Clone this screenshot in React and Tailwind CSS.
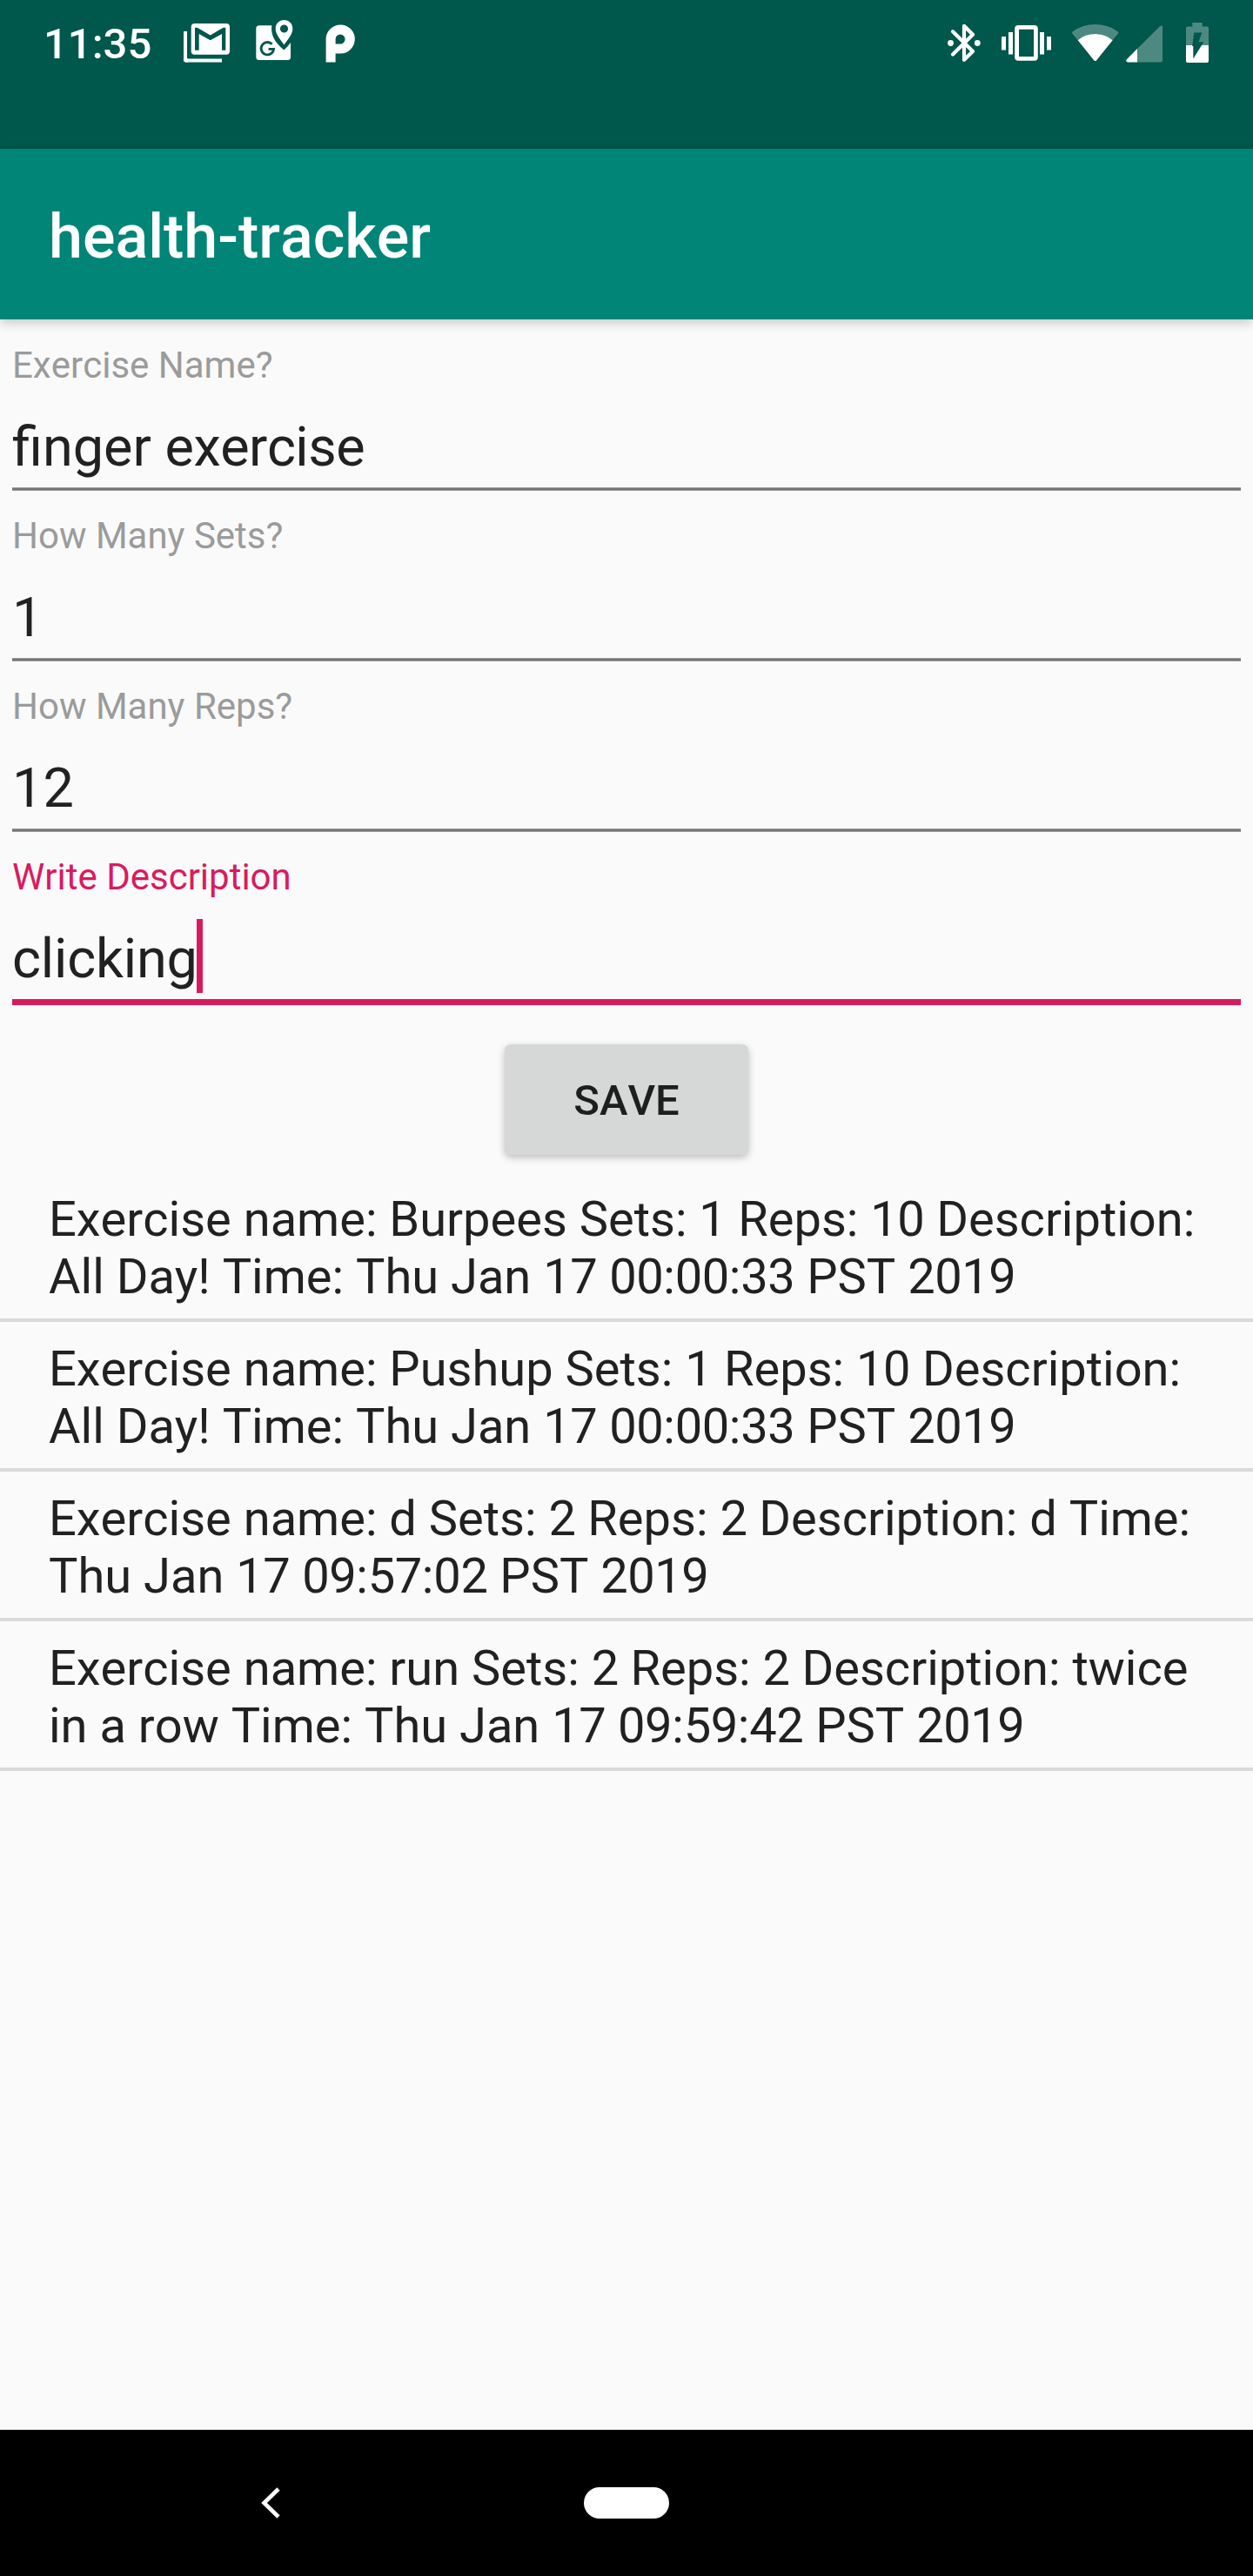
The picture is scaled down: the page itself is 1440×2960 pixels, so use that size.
import { Fragment } from "react";

const FIELDS = [
  {
    label: "Exercise Name?",
    value: (
      <>
        finger <span className="tracking-[-0.5px]">exercise</span>
      </>
    ),
  },
  { label: "How Many Sets?", value: "1" },
  { label: "How Many Reps?", value: "12" },
  { label: "Write Description", value: <span className="tracking-[-0.15px]">clicking</span>, focused: true },
];

const ENTRIES = [
  ["Exercise name: Burpees Sets: 1 Reps: 10 Description:", "All Day! Time: Thu Jan 17 00:00:33 PST 2019"],
  ["Exercise name: Pushup Sets: 1 Reps: 10 Description:", "All Day! Time: Thu Jan 17 00:00:33 PST 2019"],
  ["Exercise name: d Sets: 2 Reps: 2 Description: d Time:", "Thu Jan 17 09:57:02 PST 2019"],
  ["Exercise name: run Sets: 2 Reps: 2 Description: twice", "in a row Time: Thu Jan 17 09:59:42 PST 2019"],
];

function MailIcon() {
  return (
    <svg className="mt-[27px] ml-[37px] h-[45px] w-[54px]" viewBox="0 0 54 45" fill="none">
      <path d="M2 9V41.5Q2 42.4 2.9 42.4H44" stroke="#fff" strokeWidth="4" />
      <path d="M0 40V41.4Q0 44.4 3 44.4H5V40Z" fill="#fff" />
      <rect x="8.7" y="0" width="44.3" height="35.7" rx="4" fill="#fff" />
      <path d="M13 4.7H15.7L30.7 13.5L45.7 4.7H48.3V30.7H44V12L30.7 19.3L17.7 12V30.7H13Z" fill="#00574b" />
    </svg>
  );
}

function MapsIcon() {
  return (
    <svg className="mt-[23px] ml-[29px] h-[47px] w-[43px]" viewBox="0 0 43 47" fill="none">
      <path d="M4 6.3H18.3C17 17 21 25 32.3 34.5Q37 30.5 40 26V42.5Q40 46 36.5 46H4Q0.3 46 0.3 42.5V10Q0.3 6.3 4 6.3Z" fill="#fff" />
      <path d="M18.6 27.8A7.2 7.2 0 1 0 20.5 33.4H14.6" stroke="#00574b" strokeWidth="2.8" />
      <path fillRule="evenodd" d="M32.5 0C26.5 0 22.7 4.4 22.7 10C22.7 17 28 21.5 32.5 28.5C37 21.5 42.3 17 42.3 10C42.3 4.4 38.5 0 32.5 0ZM32.5 5.4A4.6 4.6 0 1 1 32.5 14.6A4.6 4.6 0 1 1 32.5 5.4Z" fill="#fff" />
    </svg>
  );
}

function PandoraIcon() {
  return (
    <svg className="mt-[28px] ml-[37px] h-[44px] w-[34px]" viewBox="0 0 34 44">
      <path fillRule="evenodd" fill="#fff" d="M0.6 43.6V16.8A16.6 16.6 0 1 1 17.2 33.6H11.6V43.6ZM11.6 22.5H17A5.5 5.5 0 1 0 11.6 17Z" />
    </svg>
  );
}

function BluetoothIcon() {
  return (
    <svg className="h-[45px] w-[38px]" viewBox="0 0 38 45" fill="none">
      <path d="M6 9.3L29 32L19 41.8V2.8L29 12.8L6 35.5" stroke="#fff" strokeWidth="4.2" strokeLinecap="round" strokeLinejoin="round" />
      <circle cx="3.5" cy="22.5" r="3.4" fill="#fff" />
      <circle cx="34.3" cy="22.5" r="3.4" fill="#fff" />
    </svg>
  );
}

function VibrateIcon() {
  return (
    <svg className="ml-[24px] h-[41px] w-[57px]" viewBox="0 0 57 41">
      <path fill="#fff" d="M0 13H5V28.5H0ZM8 8H13V33.5H8ZM44 8H49V33.5H44ZM52 13H57V28.5H52Z" />
      <rect x="17.6" y="2.4" width="21.8" height="36" rx="1.6" fill="none" stroke="#fff" strokeWidth="4.8" />
    </svg>
  );
}

function WifiIcon() {
  return (
    <svg className="ml-[24px] h-[43px] w-[54px]" viewBox="0 0 54 43">
      <path fill="#fff" fillOpacity="0.3" d="M0.5 10.8Q-0.5 9.4 0.8 8.3Q12 0 26.7 0Q41.5 0 52.6 8.3Q54 9.4 52.9 10.8L46.7 18.3Q39 11 26.7 11Q14.5 11 6.7 18.3Z" />
      <path fill="#fff" d="M6.7 18.3Q14.5 11 26.7 11Q39 11 46.7 18.3L28 41.4Q26.7 42.8 25.4 41.4Z" />
    </svg>
  );
}

function SignalIcon() {
  return (
    <svg className="mt-[2px] ml-[8px] h-[43px] w-[42px]" viewBox="0 0 42 43">
      <path fill="#fff" fillOpacity="0.3" d="M13 27L39.2 1Q40.4 0 41.4 0.6Q42 1 42 2V40.5Q42 42.5 40 42.5H13Z" />
      <path fill="#fff" d="M13 27V42.5H2Q-0.8 41.6 0.6 39.4Z" />
    </svg>
  );
}

function BatteryIcon() {
  return (
    <svg className="ml-[27px] h-[46px] w-[26px]" viewBox="0 0 26 46">
      <path fill="#fff" fillOpacity="0.3" d="M7.3 0H18.7V4.5H24Q26 4.5 26 6.5V26H0V6.5Q0 4.5 2 4.5H7.3Z" />
      <path fill="#fff" d="M0 26H26V44Q26 46 24 46H2Q0 46 0 44Z" />
      <path fill="#00574b" d="M9.3 11.6H18.3L14.6 22.3H20.4L8.3 41.6V27H7.2Z" />
    </svg>
  );
}

function Field({ label, value, focused }) {
  return (
    <label className="flex h-[196px] flex-col px-[14px] pt-[27px]">
      <span className={focused ? "h-[49px] text-[42px] leading-[49px] text-[#d81b60]" : "h-[49px] text-[42px] leading-[49px] text-[#9b9b9b]"}>
        {label}
      </span>
      <span className="relative mt-[33px] h-[74px] text-[63px] leading-[74px] text-[#212121]">
        {value}
        {focused && <span className="absolute top-[-9px] left-[212px] h-[85px] w-[7px] bg-[#d81b60]" />}
      </span>
      {focused ? (
        <span className="mt-[9px] h-[7px] shrink-0 bg-[#d81b60]" />
      ) : (
        <span className="mt-[9px] h-[4px] border-y border-[#9a9a9a] bg-[#757575]" />
      )}
    </label>
  );
}

// Sets digits slightly tighter than the surrounding words.
function Line({ text }) {
  return text.split(/(\d+)/).map((part, i) =>
    i % 2 ? (
      <span key={i} className="tracking-[-0.45px]">
        {part}
      </span>
    ) : (
      <Fragment key={i}>{part}</Fragment>
    ),
  );
}

export default function App() {
  return (
    <div className="flex h-[2960px] w-[1440px] flex-col bg-[#fafafa] font-['Roboto',sans-serif] [font-kerning:none]">
      <div className="flex h-[171px] shrink-0 items-start justify-between bg-[#00574b] pr-[51px] pl-[50px] text-white">
        <div className="flex items-start">
          <span className="mt-[22px] w-[124px] text-[49px] leading-[58px] font-medium">11:35</span>
          <MailIcon />
          <MapsIcon />
          <PandoraIcon />
        </div>
        <div className="flex h-[98px] items-center">
          <BluetoothIcon />
          <VibrateIcon />
          <WifiIcon />
          <SignalIcon />
          <BatteryIcon />
        </div>
      </div>
      <header className="z-10 flex h-[196px] shrink-0 items-center bg-[#008577] pl-[56px] shadow-[0_4px_12px_rgba(0,0,0,0.2)]">
        <h1 className="pt-[6px] text-[70px] leading-[82px] font-medium text-white">health-tracker</h1>
      </header>
      <main className="flex flex-1 flex-col pt-px">
        {FIELDS.map((f) => (
          <Field key={f.label} {...f} />
        ))}
        <button className="mt-[48px] h-[127px] w-[280px] self-center rounded-[7px] bg-[#d6d7d7] pt-[3px] text-[49px] leading-[58px] font-medium text-[#1e1e1e] shadow-[0_3px_8px_rgba(0,0,0,0.25)]">
          SAVE
        </button>
        <ul className="mt-[20px]">
          {ENTRIES.map((lines, i) => (
            <li key={i} className="h-[172px] border-b-4 border-[#dadada] pt-[21px] pl-[56px] text-[56px] leading-[66px] whitespace-nowrap text-[#212121]">
              <Line text={lines[0]} />
              <br />
              <Line text={lines[1]} />
            </li>
          ))}
        </ul>
      </main>
      <nav className="flex h-[168px] shrink-0 items-center bg-black pl-[300px]">
        <svg className="h-[36px] w-[22px]" viewBox="0 0 22 36" fill="none">
          <path d="M20 2L3.5 18L20 34" stroke="#fff" strokeWidth="4.6" />
        </svg>
        <div className="ml-[349px] h-[36px] w-[98px] rounded-full bg-white" />
      </nav>
    </div>
  );
}
